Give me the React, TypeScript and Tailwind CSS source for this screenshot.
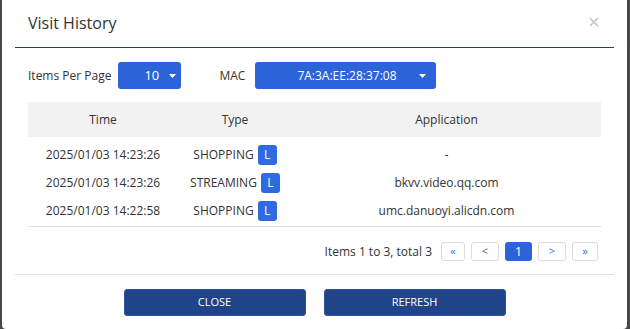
import React from "react";

const rows = [
  { time: "2025/01/03 14:23:26", type: "SHOPPING", app: "-" },
  { time: "2025/01/03 14:23:26", type: "STREAMING", app: "bkvv.video.qq.com" },
  { time: "2025/01/03 14:22:58", type: "SHOPPING", app: "umc.danuoyi.alicdn.com" },
];

function Caret() {
  return (
    <svg width="7" height="4" viewBox="0 0 7 4" className="shrink-0">
      <path d="M0 0 L7 0 L3.5 4 Z" fill="#ffffff" />
    </svg>
  );
}

function PageBtn({ label, active, w }: { label: string; active?: boolean; w: string }) {
  return (
    <div
      className={
        active
          ? `${w} h-[19px] rounded-[3px] bg-[#2d63d8] text-white text-[13px] flex items-center justify-center`
          : `${w} h-[19px] rounded-[3px] border border-[#dcdcdc] bg-white text-[#3a6bd4] text-[11px] flex items-center justify-center`
      }
    >
      {label}
    </div>
  );
}

export default function App() {
  return (
    <div className="w-[630px] h-[329px] bg-[#474747] overflow-hidden">
      <div
        className="ml-[2px] w-[625px] h-[329px] bg-white rounded-b-[4px] flex flex-col text-[#333333]"
        style={{ fontFamily: '"Open Sans", "Noto Sans", sans-serif' }}
      >
        {/* header */}
        <div className="mx-[13px] h-[48px] border-b border-[#1f3d78] flex items-start justify-between pl-[13px] pr-[15px] pt-[11px]">
          <div className="text-[16px] leading-[24px]">Visit History</div>
          <svg width="10" height="10" viewBox="0 0 10 10" className="mt-[6px]">
            <path d="M1 1 L9 9 M9 1 L1 9" stroke="#c4c4c4" strokeWidth="1.6" />
          </svg>
        </div>

        {/* filters */}
        <div className="flex items-center mt-[14px] pl-[26px] h-[27px] text-[12px]">
          <span>Items Per Page</span>
          <div className="ml-[7px] w-[63px] h-[27px] rounded-[3px] bg-[#2d63d8] text-white text-[13px] flex items-center pl-[26px] gap-[10px]">
            <span>10</span>
            <Caret />
          </div>
          <span className="ml-[38px]">MAC</span>
          <div className="ml-[10px] w-[181px] h-[27px] rounded-[3px] bg-[#2d63d8] text-white text-[12px] flex items-center justify-between pl-[42px] pr-[10px]">
            <span>7A:3A:EE:28:37:08</span>
            <Caret />
          </div>
        </div>

        {/* table */}
        <div className="mx-[26px] mt-[13px] text-[12px] border-b border-[#dedede] pb-[1px]">
          <div className="h-[35px] bg-[#f2f2f2] flex items-center">
            <div className="w-[150px] text-center">Time</div>
            <div className="w-[114px] text-center">Type</div>
            <div className="flex-1 text-center">Application</div>
          </div>
          <div className="pt-[4px]">
            {rows.map((r, i) => (
              <div key={i} className="h-[28px] flex items-center">
                <div className="w-[150px] text-center">{r.time}</div>
                <div className="w-[114px] flex items-center justify-center gap-[4px]">
                  <span>{r.type}</span>
                  <span className="w-[19px] h-[20px] rounded-[3px] bg-[#2f6ae1] text-white text-[12px] flex items-center justify-center">
                    L
                  </span>
                </div>
                <div className="flex-1 text-center">{r.app}</div>
              </div>
            ))}
          </div>
        </div>

        {/* pagination */}
        <div className="mx-[26px] mt-[15px] flex items-center justify-end pr-[3px] gap-[6px]">
          <span className="text-[12px] mr-[3px]">Items 1 to 3, total 3</span>
          <PageBtn label="«" w="w-[24px]" />
          <PageBtn label="<" w="w-[28px]" />
          <PageBtn label="1" active w="w-[27px]" />
          <PageBtn label=">" w="w-[28px]" />
          <PageBtn label="»" w="w-[26px]" />
        </div>

        {/* footer */}
        <div className="mx-[13px] mt-[13px] border-t border-[#e2e2e2] pt-[14px] flex justify-center gap-[18px]">
          <div className="w-[182px] h-[27px] rounded-[3px] bg-[#1f4488] border border-[#2a559d] text-white text-[11px] flex items-center justify-center">
            CLOSE
          </div>
          <div className="w-[182px] h-[27px] rounded-[3px] bg-[#1f4488] border border-[#2a559d] text-white text-[11px] flex items-center justify-center">
            REFRESH
          </div>
        </div>
      </div>
    </div>
  );
}
